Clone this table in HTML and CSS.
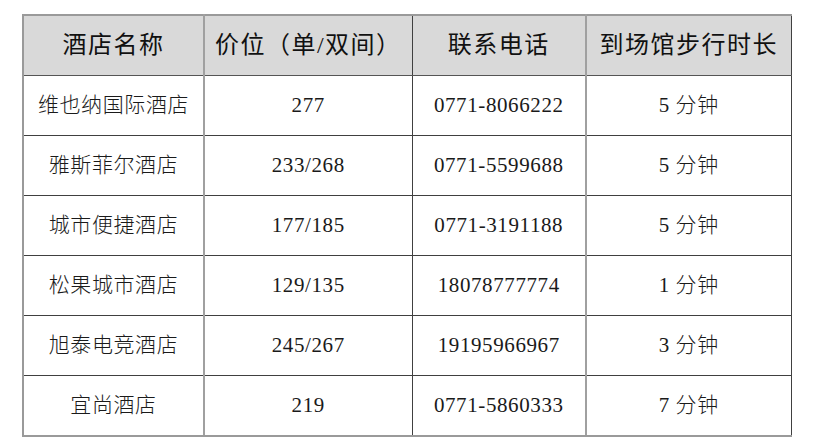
FILE: index.html
```html
<!DOCTYPE html>
<html lang="zh">
<head>
<meta charset="utf-8">
<link rel="stylesheet" href="styles.css">
</head>
<body>
<table class="hotels">
  <colgroup>
    <col class="c1"><col class="c2"><col class="c3"><col class="c4">
  </colgroup>
  <thead>
    <tr class="head">
      <th class="name">酒店名称</th>
      <th class="price">价位（单/双间）</th>
      <th class="tel">联系电话</th>
      <th class="walk">到场馆步行时长</th>
    </tr>
  </thead>
  <tbody>
    <tr><td class="name">维也纳国际酒店</td><td class="price">277</td><td class="tel">0771-8066222</td><td class="walk">5 分钟</td></tr>
    <tr><td class="name">雅斯菲尔酒店</td><td class="price">233/268</td><td class="tel">0771-5599688</td><td class="walk">5 分钟</td></tr>
    <tr><td class="name">城市便捷酒店</td><td class="price">177/185</td><td class="tel">0771-3191188</td><td class="walk">5 分钟</td></tr>
    <tr><td class="name">松果城市酒店</td><td class="price">129/135</td><td class="tel">18078777774</td><td class="walk">1 分钟</td></tr>
    <tr><td class="name">旭泰电竞酒店</td><td class="price">245/267</td><td class="tel">19195966967</td><td class="walk">3 分钟</td></tr>
    <tr class="last"><td class="name">宜尚酒店</td><td class="price">219</td><td class="tel">0771-5860333</td><td class="walk">7 分钟</td></tr>
  </tbody>
</table>
</body>
</html>
```
FILE: styles.css
```css
html, body {
  margin: 0;
  padding: 0;
  background: #ffffff;
}

body {
  padding: 14px 0 0 22px;
  font-family: "Liberation Serif", "Noto Sans CJK SC", serif;
  color: #1a1a1a;
}

.hotels {
  border-collapse: collapse;
  table-layout: fixed;
  width: 768px;
}

.c1 { width: 181px; }
.c2 { width: 208px; }
.c3 { width: 174px; }
.c4 { width: 205px; }

.hotels th,
.hotels td {
  padding: 0;
  text-align: center;
  vertical-align: middle;
  border: 1px solid #404040;
  white-space: nowrap;
  line-height: 1.2;
}

.hotels th {
  height: 59px;
  background: #d9d9d9;
  font-size: 24px;
  font-weight: 400;
  letter-spacing: 1.5px;
  color: #111111;
  border-top: 2px solid #9a9a9a;
  border-bottom: 1px solid #555555;
}

.hotels td {
  height: 59px;
  font-size: 21px;
  font-weight: 300;
  letter-spacing: 0.6px;
}

.hotels .name {
  border-left: 2px solid #9a9a9a;
  border-right: 2px solid #a0a0a0;
}

.hotels .tel {
  border-left: 1px solid #404040;
  border-right: 2px solid #a0a0a0;
}

.hotels .walk {
  border-right: 1px solid #404040;
}

.hotels .last td {
  border-bottom: 2px solid #9a9a9a;
}
```
